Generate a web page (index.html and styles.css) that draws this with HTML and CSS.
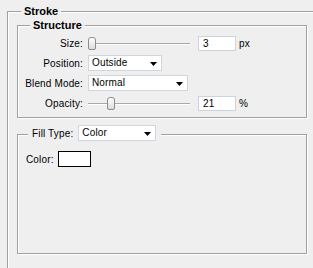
FILE: index.html
```html
<!DOCTYPE html>
<html>
<head>
<meta charset="utf-8">
<link rel="stylesheet" href="styles.css">
</head>
<body>
<div class="group outer">
  <div class="legend title title-outer">Stroke</div>
  <div class="group structure">
    <div class="legend title title-inner">Structure</div>
    <div class="row">
      <span class="lbl">Size:</span>
      <div class="slider"><span class="thumb" style="left:0px"></span></div>
      <span class="field">3</span>
      <span class="unit">px</span>
    </div>
    <div class="row">
      <span class="lbl">Position:</span>
      <div class="select sel-pos"><span>Outside</span><svg class="arrow" width="7" height="4" viewBox="0 0 7 4"><polygon points="0,0 7,0 3.5,4" fill="#000"/></svg></div>
    </div>
    <div class="row">
      <span class="lbl">Blend Mode:</span>
      <div class="select sel-blend"><span>Normal</span><svg class="arrow" width="7" height="4" viewBox="0 0 7 4"><polygon points="0,0 7,0 3.5,4" fill="#000"/></svg></div>
    </div>
    <div class="row">
      <span class="lbl">Opacity:</span>
      <div class="slider"><span class="thumb" style="left:19px"></span></div>
      <span class="field">21</span>
      <span class="unit">%</span>
    </div>
  </div>
  <div class="group fill">
    <div class="legend fill-legend">
      <span class="fill-lbl">Fill Type:</span>
      <div class="select sel-fill"><span>Color</span><svg class="arrow" width="7" height="4" viewBox="0 0 7 4"><polygon points="0,0 7,0 3.5,4" fill="#000"/></svg></div>
    </div>
    <div class="color-row">
      <span class="color-lbl">Color:</span>
      <span class="swatch"></span>
    </div>
  </div>
</div>
</body>
</html>
```
FILE: styles.css
```css
html, body {
  margin: 0;
  padding: 0;
}
body {
  background: #efefef;
  font-family: "Liberation Sans", Arial, sans-serif;
  font-size: 10px;
  letter-spacing: 0.15px;
  color: #000;
  width: 313px;
  height: 268px;
  overflow: hidden;
}
.group {
  position: relative;
  box-sizing: border-box;
  border: 1px solid #a0a0a0;
  box-shadow: inset 1px 1px 0 #fff, 1px 1px 0 #fff;
}
.legend {
  position: absolute;
  background: #efefef;
}
.title {
  font-weight: bold;
  font-size: 11px;
  letter-spacing: 0;
  line-height: 13px;
  padding: 0 3px;
  top: -7px;
}
.outer {
  margin: 11px 0 0 7px;
  width: 306px;
  height: 257px;
  border-right: 0;
  border-bottom: 0;
  box-shadow: inset 1px 1px 0 #fff;
  padding: 13px 0 0 9px;
}
.title-outer {
  left: 13px;
}
.structure {
  width: 290px;
  padding: 7px 0 4px 0;
}
.title-inner {
  left: 12px;
}
.row {
  display: flex;
  align-items: center;
  height: 20px;
}
.lbl {
  width: 65px;
  margin-right: 5px;
  text-align: right;
  white-space: nowrap;
}
.slider {
  position: relative;
  width: 102px;
  height: 13px;
  margin-right: 8px;
}
.slider::before {
  content: "";
  position: absolute;
  left: 0;
  right: 0;
  top: 6px;
  height: 0;
  border-top: 1px solid #a8a8a8;
  border-bottom: 1px solid #fff;
}
.thumb {
  position: absolute;
  top: 0;
  width: 6px;
  height: 11px;
  border: 1px solid #8c8c8c;
  border-radius: 3px 3px 2px 2px;
  background: linear-gradient(#ffffff, #dcdcdc);
}
.field {
  box-sizing: border-box;
  width: 38px;
  height: 15px;
  line-height: 13px;
  padding-left: 4px;
  border: 1px solid #cbd3dc;
  background: #fff;
}
.unit {
  margin-left: 3px;
}
.select {
  box-sizing: border-box;
  height: 16px;
  line-height: 14px;
  border: 1px solid #cfd6de;
  background: #fff;
  padding-left: 3px;
  padding-right: 4px;
  display: flex;
  align-items: center;
  justify-content: space-between;
}
.arrow {
  display: block;
  margin-top: 1px;
}
.sel-pos {
  width: 74px;
}
.sel-blend {
  width: 100px;
}
.sel-fill {
  width: 78px;
}
.fill {
  width: 290px;
  margin-top: 16px;
  padding: 16px 0 86px 8px;
}
.fill-legend {
  display: flex;
  align-items: center;
  top: -10px;
  left: 10px;
  height: 16px;
  padding: 0 5px 0 4px;
}
.fill-lbl {
  margin-right: 5px;
}
.color-row {
  display: flex;
  align-items: center;
  height: 16px;
}
.color-lbl {
  width: 32px;
}
.swatch {
  box-sizing: border-box;
  width: 33px;
  height: 16px;
  border: 1px solid #000;
  background: #fff;
}
```
